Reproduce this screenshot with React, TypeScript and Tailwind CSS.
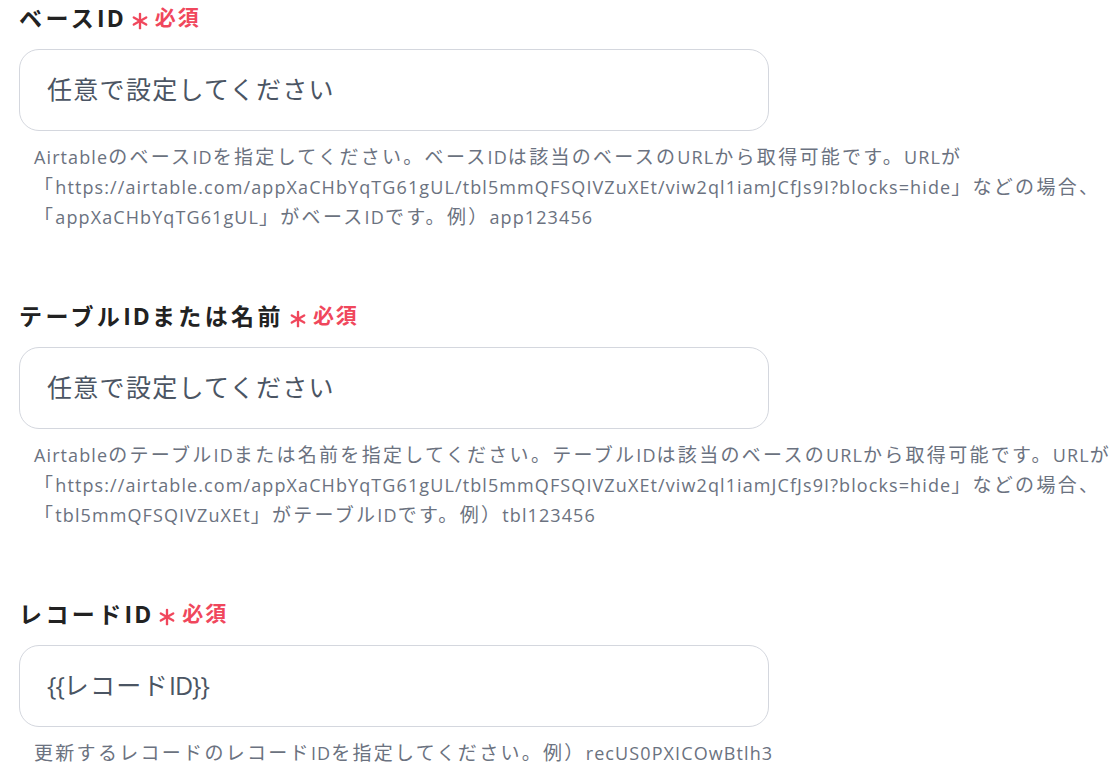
const FONT = { fontFamily: '"Open Sans", "Noto Sans CJK JP", sans-serif' };

type Field = {
    label: string;
    placeholder?: string;
    value?: string;
    help: string[];
};

const FIELDS: Field[] = [
    {
        label: "ベースID",
        placeholder: "任意で設定してください",
        help: [
            "AirtableのベースIDを指定してください。ベースIDは該当のベースのURLから取得可能です。URLが",
            "「https://airtable.com/appXaCHbYqTG61gUL/tbl5mmQFSQIVZuXEt/viw2ql1iamJCfJs9I?blocks=hide」などの場合、",
            "「appXaCHbYqTG61gUL」がベースIDです。例）app123456",
        ],
    },
    {
        label: "テーブルIDまたは名前",
        placeholder: "任意で設定してください",
        help: [
            "AirtableのテーブルIDまたは名前を指定してください。テーブルIDは該当のベースのURLから取得可能です。URLが",
            "「https://airtable.com/appXaCHbYqTG61gUL/tbl5mmQFSQIVZuXEt/viw2ql1iamJCfJs9I?blocks=hide」などの場合、",
            "「tbl5mmQFSQIVZuXEt」がテーブルIDです。例）tbl123456",
        ],
    },
    {
        label: "レコードID",
        value: "{{レコードID}}",
        help: ["更新するレコードのレコードIDを指定してください。例）recUS0PXICOwBtlh3"],
    },
];

// Japanese glyphs sit on a wider pitch than the latin text in the original
const CJK = /([\u3000-\u30ff\u3400-\u9fff\uff00-\uffef]+)/;

function Mixed({ text, cjk, latin }: { text: string; cjk: string; latin: string }) {
    return (
        <>
            {text.split(CJK).map((part, i) =>
                part === "" ? null : (
                    <span key={i} className={i % 2 === 1 ? cjk : latin}>
                        {part}
                    </span>
                )
            )}
        </>
    );
}

function RequiredMark() {
    return (
        <span className="ml-[5px] inline-flex items-center text-[#f0475c]">
            <svg width="18" height="18" viewBox="0 0 20 20" className="mt-[5px]">
                <g stroke="#f0475c" strokeWidth="2.6" strokeLinecap="round">
                    <line x1="10" y1="2" x2="10" y2="18" />
                    <line x1="3.1" y1="6" x2="16.9" y2="14" />
                    <line x1="3.1" y1="14" x2="16.9" y2="6" />
                </g>
            </svg>
            <span className="ml-[6px] text-[21px] font-bold tracking-[2px]">必須</span>
        </span>
    );
}

function FormField({ field }: { field: Field }) {
    return (
        <div className="pb-[66px]">
            {/* Label */}
            <div className="flex h-[36px] items-center">
                <span className="text-[23px] font-bold text-[#222]">
                    <Mixed text={field.label} cjk="tracking-[3.4px]" latin="tracking-[2px]" />
                </span>
                <RequiredMark />
            </div>

            {/* Input */}
            <div className="mt-[13px] flex h-[82px] w-[750px] items-center rounded-[20px] border border-[#d4d7de] bg-white pl-[27px]">
                <span className="text-[25px] text-[#4b5563]">
                    <Mixed
                        text={field.value ?? field.placeholder ?? ""}
                        cjk="tracking-[1.3px]"
                        latin="tracking-[-1px]"
                    />
                </span>
            </div>

            {/* Help text */}
            <div className="mt-[11px] pl-[15px] text-[18px] leading-[30px] text-[#6b7280]">
                {field.help.map((line, i) => (
                    <p key={i} className="whitespace-nowrap">
                        <Mixed
                            text={line}
                            cjk="text-[19px] tracking-[2.3px]"
                            latin="tracking-[1.1px]"
                        />
                    </p>
                ))}
            </div>
        </div>
    );
}

export default function App() {
    return (
        <div className="min-h-screen w-[1115px] bg-white pl-[19px]" style={FONT}>
            {FIELDS.map((f) => (
                <FormField key={f.label} field={f} />
            ))}
        </div>
    );
}
